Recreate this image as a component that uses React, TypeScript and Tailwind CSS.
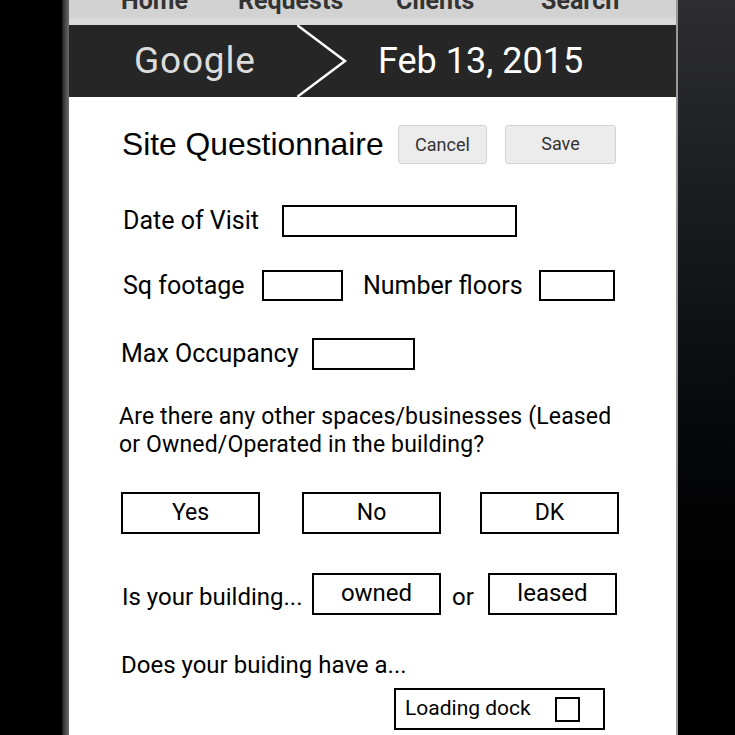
import React from "react";

const body = { fontFamily: "Roboto, 'Liberation Sans', sans-serif" };

function Box({ className }: { className: string }) {
  return <div className={"border-2 border-black bg-white " + className} />;
}

export default function App() {
  return (
    <div className="flex h-[735px] w-[735px] overflow-hidden bg-black" style={body}>
      <div className="w-[62px] shrink-0 bg-black" />
      <div className="w-[7px] shrink-0 bg-gradient-to-r from-[#1c1c1c] via-[#4a4a4a] to-[#6a6a6a]" />
      <div className="flex w-[607px] shrink-0 flex-col bg-white">
        {/* nav bar */}
        <div className="h-[25px] overflow-hidden border-b-[7px] border-[#dadada] bg-[#d2d2d2]">
          <div className="mt-[-12px] flex text-[25px] font-bold leading-[25px] text-[#333]">
            <span className="ml-[52px] w-[117px]">Home</span>
            <span className="w-[158px]">Requests</span>
            <span className="w-[145px]">Clients</span>
            <span>Search</span>
          </div>
        </div>
        {/* header */}
        <div className="flex h-[72px] items-center bg-[#262626]">
          <span className="ml-[65px] w-[163px] text-[37px] tracking-[0.8px] text-[#dcdcdc]">Google</span>
          <svg width="52" height="72" viewBox="0 0 52 72" className="shrink-0">
            <polyline points="0,0 48,36 0,72" fill="none" stroke="#ffffff" strokeWidth="2.5" />
          </svg>
          <span className="ml-[29px] text-[36px] text-white">Feb 13, 2015</span>
        </div>
        {/* form */}
        <div className="flex flex-col text-[25px] text-black">
          <div className="mt-[28px] flex h-[39px] items-center">
            <span className="ml-[53px] w-[276px] text-[31.8px] leading-none" style={{ fontFamily: "'Liberation Sans', Arial, sans-serif" }}>
              Site Questionnaire
            </span>
            <div className="flex h-[39px] w-[89px] items-center justify-center rounded-[3px] border border-[#d4d4d4] bg-[#ececec] text-[18px] text-[#333]">
              Cancel
            </div>
            <div className="ml-[18px] flex h-[39px] w-[111px] items-center justify-center rounded-[3px] border border-[#d4d4d4] bg-[#ececec] pb-[2px] text-[18px] text-[#333]">
              Save
            </div>
          </div>

          <div className="mt-[41px] flex h-[32px] items-center">
            <span className="ml-[54px] w-[159px]">Date of Visit</span>
            <Box className="h-[32px] w-[235px]" />
          </div>

          <div className="mt-[33px] flex h-[31px] items-center">
            <span className="ml-[54px] w-[139px]">Sq footage</span>
            <Box className="h-[31px] w-[81px]" />
            <span className="ml-[20px] w-[176px]">Number floors</span>
            <Box className="h-[31px] w-[76px]" />
          </div>

          <div className="mt-[37px] flex h-[32px] items-center">
            <span className="ml-[52px] w-[191px]">Max Occupancy</span>
            <Box className="h-[32px] w-[103px]" />
          </div>

          <p className="ml-[50px] mt-[33px] w-[495px] text-[23px] leading-[28px] tracking-[0.15px]">
            Are there any other spaces/businesses (Leased or Owned/Operated in the building?
          </p>

          <div className="mt-[33px] flex h-[42px] text-[23px]">
            <div className="ml-[52px] flex h-[42px] w-[139px] items-center justify-center border-2 border-black">Yes</div>
            <div className="ml-[42px] flex h-[42px] w-[139px] items-center justify-center border-2 border-black">No</div>
            <div className="ml-[39px] flex h-[42px] w-[139px] items-center justify-center border-2 border-black">DK</div>
          </div>

          <div className="mt-[39px] flex h-[42px] items-end text-[24px]">
            <span className="ml-[53px] w-[190px]">Is your building...</span>
            <div className="flex h-[42px] w-[129px] items-center justify-center border-2 border-black pb-[3px]">owned</div>
            <span className="ml-[11px] w-[36px]">or</span>
            <div className="flex h-[42px] w-[129px] items-center justify-center border-2 border-black pb-[3px]">leased</div>
          </div>

          <div className="ml-[52px] mt-[36px] text-[24px] leading-[28px]">Does your buiding have a...</div>

          <div className="ml-[325px] mt-[9px] flex h-[42px] w-[211px] items-center border-2 border-black text-[21px]">
            <span className="ml-[9px] w-[150px]">Loading dock</span>
            <Box className="h-[25px] w-[25px]" />
          </div>
        </div>
      </div>
      <div className="w-[2px] shrink-0 bg-[#9a9a9a]" />
      <div className="flex-1 bg-gradient-to-b from-[#2e2e31] via-[#121418] via-40% to-black" />
    </div>
  );
}
